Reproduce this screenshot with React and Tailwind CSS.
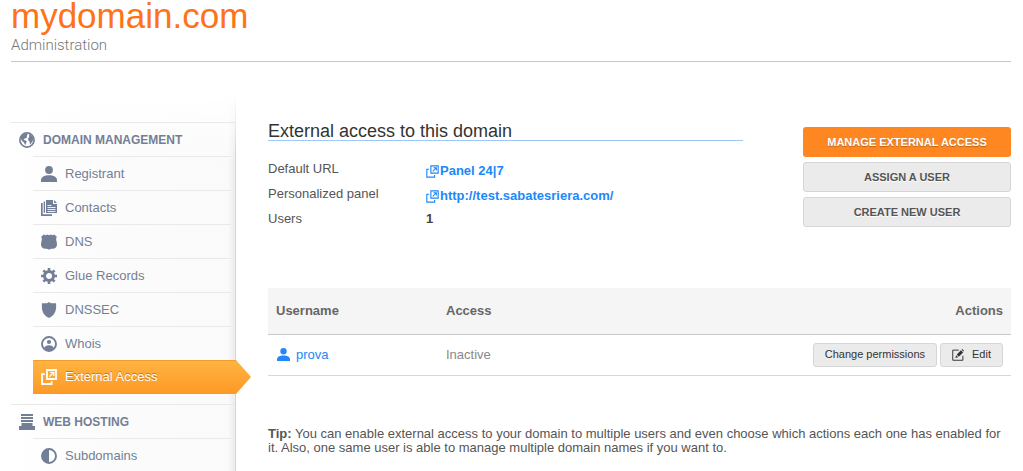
import React from 'react';

const Svg = ({ size = 'size-4', children, box = '0 0 16 16' }) => (
  <svg viewBox={box} className={`${size} shrink-0`} fill="currentColor" aria-hidden="true">
    {children}
  </svg>
);

const GlobeIcon = () => (
  <Svg>
    <circle cx="8" cy="8" r="7.1" fill="none" stroke="currentColor" strokeWidth="1.7" />
    <path d="M3.2 3 7 1.4 8.600 2 8.400 3 7.600 4.200 8.400 5 7 6.200 5.600 6.600 4.600 8 6.400 8.200 7.800 9.400 7 11.200 6.400 13 5.600 12 5 10.400 3.400 9.200 2.200 7.400 1.800 5.200Z" />
    <path d="M10 2 12.600 3.200 14.400 6 14 8.600 12.600 10.600 11.600 12.400 10.800 11.600 10.600 9.400 9.400 8.400 9 6.600 10 5.400 10.200 4.200Z" />
  </Svg>
);
const PersonIcon = ({ size }) => (
  <Svg size={size}>
    <circle cx="8" cy="4" r="3.9" />
    <path d="M0 16v-1.8C0 10.800 3.400 9.200 8 9.200s8 1.600 8 5V16Z" />
  </Svg>
);
const ContactsIcon = () => (
  <Svg>
    <path d="M5 0h7v4h4v9H5Z M13 0l3 3h-3Z" />
    <path d="M0 3h1.700v11.300H11V16H0Z M2.700 1.500H4v11.300H3.900 2.700Z" />
    <path d="M6.500 5.500h4M6.500 7.500h8M6.500 9.500h8M6.500 11.500h8" stroke="#fcfcfc" strokeWidth=".9" />
  </Svg>
);
const BadgeIcon = () => (
  <Svg>
    <path d="M2.800.4 4.600 1.200 6.400.5 8 1.200 9.600.5l1.800.7L13.200.4l2.600 2.400-.7 2c.1 1.900.9 3.500.9 5.600 0 2.700-1.700 4.100-4.400 4.300-1.500.1-2.600.3-3.600 1-1-.7-2.100-.9-3.600-1C1.700 14.500 0 13.100 0 10.400c0-2.100.8-3.700.9-5.600l-.7-2Z" />
  </Svg>
);
const GearIcon = () => (
  <Svg>
    <circle cx="8" cy="8" r="4.500" fill="none" stroke="currentColor" strokeWidth="3" />
    <path
      d="M8 0v3M8 13v3M0 8h3M13 8h3M2.400 2.400l2 2M11.600 11.600l2 2M13.600 2.400l-2 2M4.400 11.600l-2 2"
      stroke="currentColor"
      strokeWidth="2.600"
    />
  </Svg>
);
const ShieldIcon = () => (
  <Svg>
    <path d="M8 0c1 .9 1.800 1.300 3 1.300 1.400 0 2.600-.2 4-.1.600 6.300-.4 11.700-7 14.800C1.400 12.900.4 7.500 1 1.200c1.400-.1 2.600.1 4 .1C6.200 1.300 7 .9 8 0Z" />
  </Svg>
);
const WhoisIcon = () => (
  <Svg>
    <circle cx="8" cy="8" r="7" fill="none" stroke="currentColor" strokeWidth="1.900" />
    <circle cx="8" cy="6" r="2.100" />
    <path d="M3.200 12.600c.4-2.400 2.200-3.400 4.800-3.400s4.400 1 4.800 3.400C11.500 14 10 14.700 8 14.700S4.500 14 3.200 12.600Z" />
  </Svg>
);
const ExternalIcon = ({ size, weight = 1.8 }) => (
  <Svg size={size}>
    <path
      d="M6 1h9v9H6ZM3.800 5.200H1V15h9.600v-2.800"
      fill="none"
      stroke="currentColor"
      strokeWidth={weight}
    />
    <path d="M8.300 7.800 12.500 3.600M9.200 3.300h3.600v3.600" fill="none" stroke="currentColor" strokeWidth="1.300" />
  </Svg>
);
const HostingIcon = () => (
  <Svg>
    <path d="M2 0h12v2H2ZM2 3h12v2H2ZM2 6h12v2H2ZM2.500 9h11v3H16v4H0v-4h2.500Z" />
  </Svg>
);
const ContrastIcon = () => (
  <Svg>
    <circle cx="8" cy="8" r="7" fill="none" stroke="currentColor" strokeWidth="1.900" />
    <path d="M8 1a7 7 0 0 0 0 14Z" />
  </Svg>
);
const EditIcon = () => (
  <Svg size="size-3">
    <path d="M9 1.500H1v13.500h13.500V9" fill="none" stroke="currentColor" strokeWidth="1.300" />
    <path d="M4.500 12 5.500 8.300 8.200 11Z M6.300 7.400 12 1.700l2.800 2.800L9.100 10.200Z M12.800 1 13.800 0 16 2.200l-1 1.100Z" />
  </Svg>
);

const sections = [
  {
    title: 'DOMAIN MANAGEMENT',
    Icon: GlobeIcon,
    items: [
      ['Registrant', PersonIcon],
      ['Contacts', ContactsIcon],
      ['DNS', BadgeIcon],
      ['Glue Records', GearIcon],
      ['DNSSEC', ShieldIcon],
      ['Whois', WhoisIcon],
      ['External Access', ExternalIcon, true],
    ],
  },
  { title: 'WEB HOSTING', Icon: HostingIcon, items: [['Subdomains', ContrastIcon]] },
];

function Sidebar() {
  return (
    <nav className="mt-8 flex w-[225px] shrink-0 flex-col gap-2.5 border-r border-[#dcdcdc] bg-[linear-gradient(to_bottom,#fff,transparent_70px),linear-gradient(to_left,#ececec,#fafafa_7px,#fbfbfb_50%,#fff)] pt-7 text-[#737f96] [border-image:linear-gradient(to_bottom,#fff,#d6d6d6_60px)_1]">
      {sections.map(({ title, Icon, items }) => (
        <section key={title}>
          <h3 className="flex h-[34px] items-center gap-2 border-t border-[#e9e9e9] pl-2 text-xs font-bold">
            <Icon />
            {title}
          </h3>
          <ul className="pl-[22px]">
            {items.map(([label, ItemIcon, active]) => (
              <li key={label}>
                <a
                  href="#"
                  aria-current={active ? 'page' : undefined}
                  className={
                    active
                      ? '-mr-4 flex h-[34px] items-center gap-2 border-y border-[#f39a30] bg-linear-to-b from-[#ffb340] to-[#fd9a26] pl-2 text-[13px] text-white [clip-path:polygon(0_0,calc(100%-15px)_0,100%_50%,calc(100%-15px)_100%,0_100%)] [text-shadow:0_-1px_0_#c9761c]'
                      : 'mr-1 flex h-[34px] items-center gap-2 border-t border-[#e9e9e9] pl-2 text-[13px]'
                  }
                >
                  <ItemIcon />
                  {label}
                </a>
              </li>
            ))}
          </ul>
        </section>
      ))}
    </nav>
  );
}

const linkClass = 'flex items-center gap-px pt-1 font-bold text-[#2287f8]';
const sideButton =
  'h-[30px] rounded-[3px] border border-[#d6d6d6] bg-[#ebebeb] text-[11px] font-bold text-[#555] [text-shadow:0_1px_0_#fff]';
const rowButton =
  'flex h-6 items-center rounded-[3px] border border-[#d6d6d6] bg-[#ebebeb] px-[11px] text-[11px] text-[#333]';

export default function App() {
  return (
    <div className="bg-white pr-3 pl-[11px] font-['Liberation_Sans',Arial,sans-serif] text-[13px] text-[#555]">
      <header className="border-b border-[#c6c6c6] pb-[7px]">
        <h1 className="text-[35px] leading-8 text-[#ff7318]">mydomain.com</h1>
        <p className="mt-1 font-['Roboto',sans-serif] text-[15px] leading-[18px] font-light text-[#777]">
          Administration
        </p>
      </header>

      <div className="flex gap-8">
        <Sidebar />

        <main className="min-w-0 flex-1 pt-[58px]">
          <div className="flex items-start gap-[60px]">
            <section className="min-w-0 flex-1">
              <h2 className="border-b border-[#a0c8f6] pt-0.5 text-lg leading-[18px] text-[#333]">
                External access to this domain
              </h2>
              <dl className="mt-4 grid grid-cols-[158px_1fr] auto-rows-[25px] leading-6">
                <dt>Default URL</dt>
                <dd>
                  <a href="#" className={linkClass}>
                    <ExternalIcon size="size-[13px]" weight={1.4} />
                    <span className="leading-5">Panel 24|7</span>
                  </a>
                </dd>
                <dt>Personalized panel</dt>
                <dd>
                  <a href="#" className={linkClass}>
                    <ExternalIcon size="size-[13px]" weight={1.4} />
                    <span className="leading-5">http://test.sabatesriera.com/</span>
                  </a>
                </dd>
                <dt>Users</dt>
                <dd className="font-bold text-[#444]">1</dd>
              </dl>
            </section>
            <div className="flex w-[208px] shrink-0 flex-col gap-[5px] pt-[7px]">
              <button
                type="button"
                className="h-[30px] rounded-[3px] bg-[#ff8722] text-[11px] font-bold text-white [text-shadow:0_1px_1px_#b8621a]"
              >
                MANAGE EXTERNAL ACCESS
              </button>
              <button type="button" className={sideButton}>ASSIGN A USER</button>
              <button type="button" className={sideButton}>CREATE NEW USER</button>
            </div>
          </div>

          <table className="mt-14 w-full border-collapse text-left">
            <thead>
              <tr className="h-[46px] border-b border-[#c8c8c8] bg-[#f5f5f5] text-[#666]">
                <th className="w-[178px] px-2">Username</th>
                <th>Access</th>
                <th className="px-2 text-right">Actions</th>
              </tr>
            </thead>
            <tbody>
              <tr className="h-[41px] border-b border-[#d8d8d8]">
                <td className="px-2">
                  <a href="#" className="flex items-center gap-1.5 pl-px text-[#2287f8]">
                    <PersonIcon size="size-[13px]" />
                    prova
                  </a>
                </td>
                <td className="text-[#888]">Inactive</td>
                <td className="px-2">
                  <div className="flex justify-end gap-[3px]">
                    <button type="button" className={rowButton}>Change permissions</button>
                    <button type="button" className={`${rowButton} gap-2`}>
                      <EditIcon />
                      Edit
                    </button>
                  </div>
                </td>
              </tr>
            </tbody>
          </table>

          <p className="mt-[51px] leading-[14px]">
            <strong>Tip:</strong> You can enable external access to your domain to multiple users and
            even choose which actions each one has enabled for it. Also, one same user is able to
            manage multiple domain names if you want to.
          </p>
        </main>
      </div>
    </div>
  );
}
